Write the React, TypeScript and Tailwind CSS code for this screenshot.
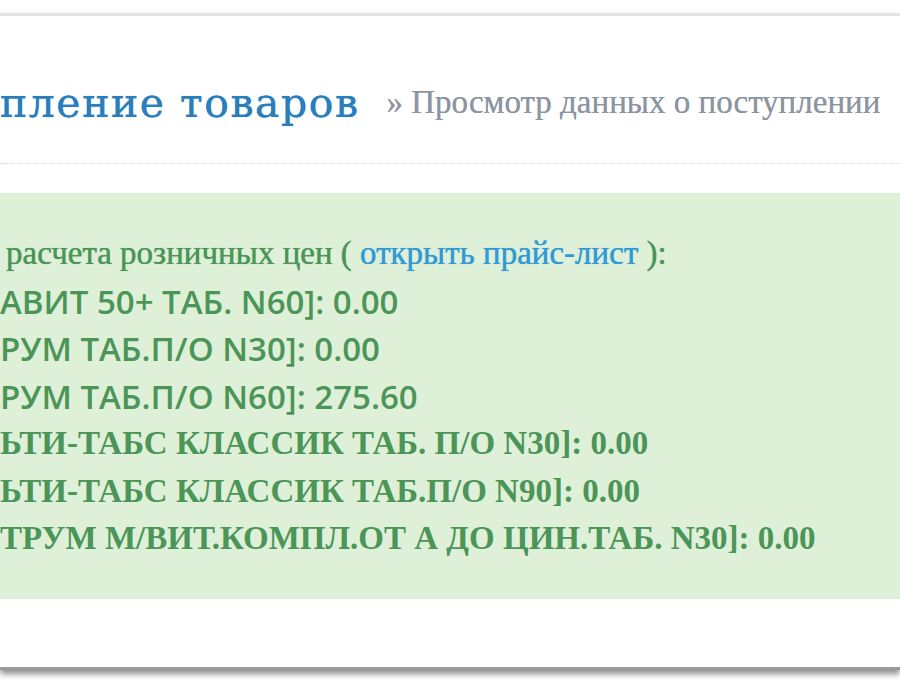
import React from "react";

const serif = { fontFamily: '"Liberation Serif", "Times New Roman", serif' };

export default function App() {
  const sansLine =
    "whitespace-nowrap leading-[47.5px] text-[33px] font-semibold font-['Open_Sans',_'DejaVu_Sans',_sans-serif]";
  const serifLine =
    "whitespace-nowrap leading-[47.5px] text-[33px] font-['Liberation_Serif',_'Times_New_Roman',_serif]";
  return (
    <div className="w-[900px] h-[700px] overflow-hidden bg-white pt-[13px]">
      <div className="h-[657px] bg-white border-t-[3px] border-b-[3px] border-t-[#e2e2e2] border-b-[#9a9a9a] shadow-[0_4px_6px_rgba(0,0,0,0.45)] flex flex-col">
        <div className="pt-[62px] whitespace-nowrap leading-[48px] text-[41px] font-['DejaVu_Serif',_serif]">
          <span className="text-[#2b7dbc] tracking-[1.5px] [text-shadow:0_0_0.8px_#2b7dbc]">
            пление товаров
          </span>
          <span
            className="ml-[27px] align-[4px] text-[33px] text-[#8e95a2] [text-shadow:0_0_0.5px_#8e95a2]"
            style={serif}
          >
            » Просмотр данных о поступлении
          </span>
        </div>
        <div className="mt-[36px] border-b border-dotted border-[#d6d6d6]" />
        <div className="mt-[29px] h-[406px] bg-[#dff0d8] pt-[37px] text-[#4b9558]">
          <div className={serifLine + " pl-[6px] [text-shadow:0_0_0.8px_#4b9558]"}>
            расчета розничных цен ({" "}
            <span className="text-[#3399d6] [text-shadow:0_0_0.8px_#3399d6]">
              открыть прайс-лист
            </span>{" "}
            ):
          </div>
          <div className={sansLine}>АВИТ 50+ ТАБ. N60]: 0.00</div>
          <div className={sansLine}>РУМ ТАБ.П/О N30]: 0.00</div>
          <div className={sansLine}>РУМ ТАБ.П/О N60]: 275.60</div>
          <div className={serifLine + " font-bold"}>
            ЬТИ-ТАБС КЛАССИК ТАБ. П/О N30]: 0.00
          </div>
          <div className={serifLine + " font-bold"}>
            ЬТИ-ТАБС КЛАССИК ТАБ.П/О N90]: 0.00
          </div>
          <div className={serifLine + " font-bold"}>
            ТРУМ М/ВИТ.КОМПЛ.ОТ А ДО ЦИН.ТАБ. N30]: 0.00
          </div>
        </div>
      </div>
    </div>
  );
}
